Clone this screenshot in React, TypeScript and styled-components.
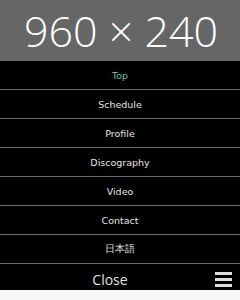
import styled, { createGlobalStyle } from 'styled-components';

const GlobalStyle = createGlobalStyle`
  html, body {
    margin: 0;
    padding: 0;
    background: #f6f6f6;
  }
  ul {
    margin: 0;
    padding: 0;
    list-style: none;
  }
`;

const Header = styled.header`
  height: 61px;
  background: #666666;
  display: flex;
  align-items: center;
  justify-content: center;
  color: #ffffff;
  font-family: 'Open Sans', sans-serif;
  font-weight: 300;
  font-size: 43px;
  padding-left: 2px;
`;

const Nav = styled.nav`
  background: #000000;
`;

const Item = styled.li<{ $active?: boolean }>`
  height: 28px;
  border-bottom: 1px solid #6a6a6a;
  display: flex;
  align-items: center;
  justify-content: center;
  font-family: 'DejaVu Sans', Verdana, sans-serif;
  font-size: 9.5px;
  color: ${(p) => (p.$active ? '#5ec8b8' : '#e4e4e4')};
`;

const CloseBar = styled.div`
  height: 26px;
  background: #000000;
  display: flex;
  align-items: center;
  position: relative;
`;

const CloseLabel = styled.span`
  flex: 1;
  text-align: center;
  padding-right: 20px;
  padding-top: 5px;
  font-family: 'Open Sans', sans-serif;
  font-size: 14px;
  color: #e0e0e0;
`;

const Burger = styled.div`
  position: absolute;
  right: 8px;
  top: 8px;
  width: 17px;
  display: flex;
  flex-direction: column;
  gap: 3px;
`;

const Bar = styled.span`
  display: block;
  height: 3px;
  background: #dcdcdc;
`;

const items = ['Top', 'Schedule', 'Profile', 'Discography', 'Video', 'Contact', '日本語'];

export default function App() {
  return (
    <>
      <GlobalStyle />
      <Header>960 × 240</Header>
      <Nav>
        <ul>
          {items.map((label, i) => (
            <Item key={label} $active={i === 0}>
              {label}
            </Item>
          ))}
        </ul>
        <CloseBar>
          <CloseLabel>Close</CloseLabel>
          <Burger>
            <Bar />
            <Bar />
            <Bar />
          </Burger>
        </CloseBar>
      </Nav>
    </>
  );
}
